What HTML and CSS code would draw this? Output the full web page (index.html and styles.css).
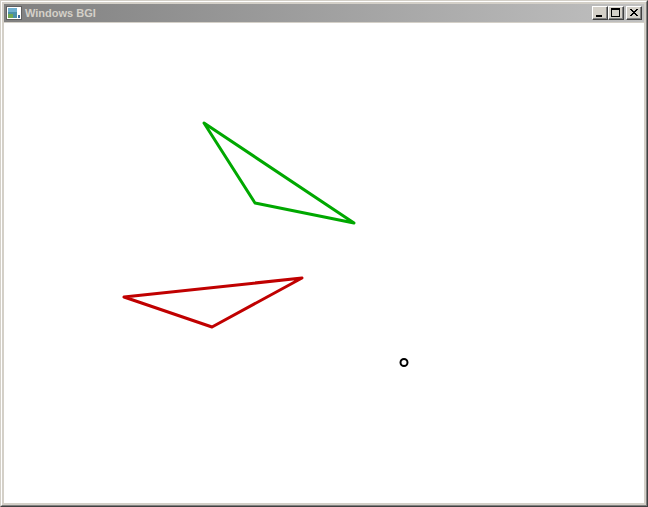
FILE: index.html
```html
<!DOCTYPE html>
<html>
<head>
<meta charset="utf-8">
<link rel="stylesheet" href="styles.css">
</head>
<body>
<div class="window">
  <div class="frame">
    <div class="titlebar">
      <svg class="appicon" width="16" height="16" viewBox="0 0 16 16">
        <rect x="0.5" y="1.5" width="15" height="13" fill="#fff" stroke="#606060"/>
        <rect x="2" y="3" width="9" height="10" fill="#4a90a8"/>
        <rect x="2" y="3" width="9" height="4" fill="#70b0d0"/>
        <rect x="2" y="9" width="5" height="4" fill="#70a850"/>
        <rect x="12" y="3" width="2" height="5" fill="#ffffff"/>
        <rect x="12" y="10" width="2" height="3" fill="#3a6aa0"/>
      </svg>
      <span class="title">Windows BGI</span>
      <div class="buttons">
        <div class="btn">
          <svg width="12" height="10" viewBox="0 0 12 10"><rect x="2" y="7" width="6" height="2" fill="#000"/></svg>
        </div>
        <div class="btn">
          <svg width="12" height="10" viewBox="0 0 12 10"><rect x="1.5" y="0.5" width="8" height="8" fill="none" stroke="#000"/><rect x="1" y="0" width="9" height="2" fill="#000"/></svg>
        </div>
        <div class="btn btn-close">
          <svg width="12" height="10" viewBox="0 0 12 10"><path d="M2 1 L9 8 M3 1 L10 8 M9 1 L2 8 M10 1 L3 8" stroke="#000" stroke-width="1" fill="none" shape-rendering="crispEdges"/></svg>
        </div>
      </div>
    </div>
    <div class="client">
      <svg width="640" height="480" viewBox="0 0 640 480">
        <polygon points="200,100 251,180 350,200" fill="none" stroke="#00a800" stroke-width="3" stroke-linejoin="round"/>
        <polygon points="120,274 298,255 208,304" fill="none" stroke="#c00000" stroke-width="3" stroke-linejoin="round"/>
        <circle cx="400" cy="339.5" r="3.5" fill="none" stroke="#000" stroke-width="2"/>
      </svg>
    </div>
  </div>
</div>
</body>
</html>
```
FILE: styles.css
```css
html, body {
  margin: 0;
  padding: 0;
  background: #d4d0c8;
}
.window {
  width: 648px;
  height: 507px;
  box-sizing: border-box;
  border: 1px solid;
  border-color: #d4d0c8 #404040 #404040 #d4d0c8;
}
.frame {
  box-sizing: border-box;
  height: 505px;
  border: 1px solid;
  border-color: #ffffff #808080 #808080 #ffffff;
  padding: 2px;
  background: #d4d0c8;
}
.titlebar {
  height: 18px;
  margin-bottom: 1px;
  background: linear-gradient(to right, #808080, #c0c0c0);
  display: flex;
  align-items: center;
  padding-left: 2px;
  padding-right: 2px;
}
.appicon {
  display: block;
  flex: none;
}
.title {
  margin-left: 3px;
  font-family: "Liberation Sans", "DejaVu Sans", sans-serif;
  font-weight: bold;
  font-size: 11px;
  color: #d4d0c8;
  flex: 1;
}
.buttons {
  display: flex;
  align-items: center;
}
.btn {
  width: 16px;
  height: 14px;
  box-sizing: border-box;
  background: #d4d0c8;
  border: 1px solid;
  border-color: #ffffff #404040 #404040 #ffffff;
  box-shadow: inset -1px -1px 0 #808080;
  display: flex;
  align-items: center;
  justify-content: center;
}
.btn svg {
  display: block;
}
.btn-close {
  margin-left: 2px;
}
.client {
  width: 640px;
  height: 480px;
  background: #ffffff;
}
.client svg {
  display: block;
}
```
